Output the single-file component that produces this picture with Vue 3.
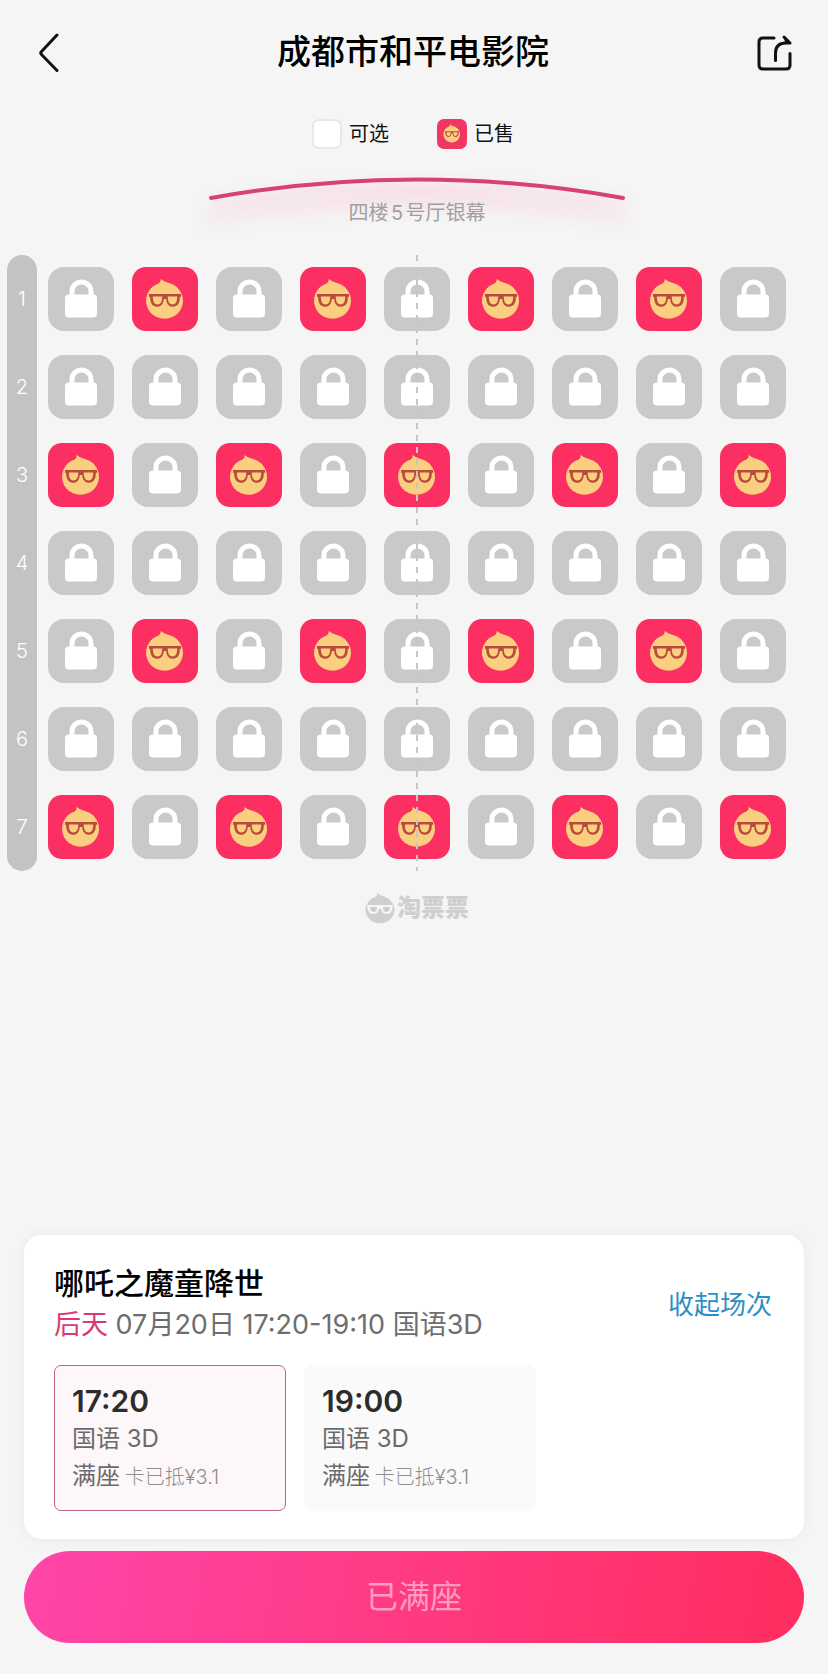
<script setup>
import { ref } from 'vue'

const odd = [2, 4, 6, 8]
const even = [1, 3, 5, 7, 9]
const soldByRow = { 1: odd, 3: even, 5: odd, 7: even }

const rows = Array.from({ length: 7 }, (_, r) => ({
  number: r + 1,
  seats: Array.from({ length: 9 }, (_, c) => ({
    number: c + 1,
    sold: (soldByRow[r + 1] || []).includes(c + 1),
  })),
}))

const sessions = [
  { time: '17:20', format: '国语 3D', state: '满座', note: '卡已抵¥3.1' },
  { time: '19:00', format: '国语 3D', state: '满座', note: '卡已抵¥3.1' },
]
const selected = ref(0)
</script>

<template>
  <main class="page">
    <svg class="defs" aria-hidden="true">
      <symbol id="lock" viewBox="0 0 66 64">
        <path d="M24 31V24.500a9.500 9.500 0 0 1 19 0V31" fill="none" stroke="#fff" stroke-width="5" />
        <rect x="17" y="27.500" width="32" height="23" rx="4" fill="#fff" />
      </symbol>
      <symbol id="face" viewBox="0 0 66 64">
        <path
          d="M28.500 12C32 15 37 15.500 41 17.500A18.500 18.200 0 1 1 24 17.500C27.500 16.500 29 15 28.500 12Z"
          fill="#fbcf80"
        />
        <path
          d="M17 27H49V29.500L47.800 30.500C47.800 36 45.500 39.800 41 39.800C37 39.800 34.600 37 34.200 32H31.800C31.400 37 29 39.800 25 39.800C20.500 39.800 18.200 36 18.200 30.500L17 29.500Z"
          fill="#b94b3c"
        />
        <path
          d="M20.800 29.500H30.300C30.300 34.500 28.600 37.500 25.500 37.500C22.200 37.500 20.800 34.500 20.800 29.500ZM35.700 29.500H45.200C45.200 34.500 43.800 37.500 40.500 37.500C37.400 37.500 35.700 34.500 35.700 29.500Z"
          fill="#fbcf80"
        />
      </symbol>
    </svg>

    <header class="header">
      <button class="icon-button" type="button" aria-label="返回">
        <svg width="22" height="40" viewBox="0 0 22 40">
          <path
            d="M20 3L4.500 19.500Q3 21 4.500 22.500L20 38.500"
            fill="none" stroke="#111" stroke-width="3" stroke-linecap="round" stroke-linejoin="round"
          />
        </svg>
      </button>
      <h1 class="cinema">成都市和平电影院</h1>
      <button class="icon-button" type="button" aria-label="分享">
        <svg width="38" height="38" viewBox="0 0 38 38">
          <g fill="none" stroke="#111" stroke-width="3" stroke-linecap="round" stroke-linejoin="round">
            <path d="M19 5H8Q4 5 4 9V32Q4 36 8 36H31Q35 36 35 32V20.500" />
            <path d="M20.500 27.500V20Q20.500 10 31 10H35L29 4" />
          </g>
          <path d="M29 4L36 10H30Z" fill="#111" />
        </svg>
      </button>
    </header>

    <ul class="legend">
      <li><span class="swatch free"></span>可选</li>
      <li>
        <span class="swatch taken"><svg><use href="#face" /></svg></span>已售
      </li>
    </ul>

    <section class="screen">
      <svg class="arc" viewBox="0 0 454 80" aria-hidden="true">
        <defs>
          <linearGradient id="glow" x1="0" y1="0" x2="0" y2="1">
            <stop offset="0" stop-color="#ff5a8a" stop-opacity="0.14" />
            <stop offset="1" stop-color="#ff5a8a" stop-opacity="0.03" />
          </linearGradient>
          <filter id="soft" x="-10%" y="-30%" width="120%" height="170%">
            <feGaussianBlur stdDeviation="6" />
          </filter>
        </defs>
        <path d="M20 29Q227 -6 434 29L440 60Q227 24 14 60Z" fill="url(#glow)" filter="url(#soft)" />
        <path d="M21 28Q227 -9 433 28" fill="none" stroke="#d84270" stroke-width="4" stroke-linecap="round" />
      </svg>
      <p class="hall">四楼5号厅银幕</p>
    </section>

    <section class="hall-map" aria-label="座位图">
      <ol class="rail">
        <li v-for="row in rows" :key="row.number">{{ row.number }}</li>
      </ol>
      <div class="seats">
        <div v-for="row in rows" :key="row.number" class="row">
          <button
            v-for="seat in row.seats"
            :key="seat.number"
            type="button"
            class="seat"
            :class="{ sold: seat.sold }"
            :aria-label="`${row.number}排${seat.number}座`"
            disabled
          >
            <svg><use :href="seat.sold ? '#face' : '#lock'" /></svg>
          </button>
        </div>
        <span class="axis"></span>
      </div>
    </section>

    <div class="brand">
      <svg width="30" height="32" viewBox="0 0 30 32" aria-hidden="true">
        <path d="M12 1C15 3.500 19 4 22 6A14.500 13.500 0 1 1 8 6C11 5 12.500 3.500 12 1Z" fill="#cfcfcf" />
        <path
          d="M2 13H28Q27.500 22 21.500 22Q17 22 16 17H14Q13 22 8.500 22Q2.500 22 2 13Z"
          fill="#f5f5f5"
        />
        <path d="M5 15H12Q12 20 8.700 20Q5.500 20 5 15ZM18 15H25Q24.500 20 21.300 20Q18 20 18 15Z" fill="#cfcfcf" />
      </svg>
      <span>淘票票</span>
    </div>

    <section class="card">
      <div class="card-head">
        <div>
          <h2 class="film">哪吒之魔童降世</h2>
          <p class="when"><em>后天</em> 07月20日 17:20-19:10 国语3D</p>
        </div>
        <a class="toggle" href="#">收起场次</a>
      </div>
      <div class="sessions">
        <button
          v-for="(session, i) in sessions"
          :key="session.time"
          type="button"
          class="session"
          :class="{ active: selected === i }"
          @click="selected = i"
        >
          <strong>{{ session.time }}</strong>
          <span>{{ session.format }}</span>
          <span>{{ session.state }} <small>{{ session.note }}</small></span>
        </button>
      </div>
    </section>

    <button class="submit" type="button" disabled>已满座</button>
  </main>
</template>

<style>
body {
  margin: 0;
  background: #f5f5f5;
}
</style>

<style scoped>
.page {
  box-sizing: border-box;
  min-height: 100vh;
  padding-bottom: 31px;
  display: flex;
  flex-direction: column;
  background: #f5f5f5;
  color: #111;
  font-family: Inter, "Noto Sans CJK SC", sans-serif;
}
button {
  padding: 0;
  border: 0;
  background: none;
  font-family: inherit;
  color: inherit;
}
h1, h2, p, ul, ol {
  margin: 0;
  padding: 0;
  list-style: none;
}
.defs {
  position: absolute;
  width: 0;
  height: 0;
}
.header {
  display: flex;
  align-items: center;
  justify-content: space-between;
  height: 104px;
  padding: 0 35px 0 37px;
}
.icon-button {
  display: flex;
  width: 38px;
}
.cinema {
  padding-right: 4px;
  font-size: 34px;
  line-height: 48px;
  font-weight: 500;
  color: #000;
}
.legend {
  display: flex;
  justify-content: center;
  gap: 48px;
  margin-top: 15px;
  padding-right: 2px;
  font-size: 20px;
  line-height: 30px;
}
.legend li {
  display: flex;
  gap: 7px;
}
.swatch {
  box-sizing: border-box;
  width: 30px;
  height: 30px;
  border-radius: 7px;
}
.free {
  background: #fff;
  border: 2px solid #e8e8e8;
}
.taken {
  background: #f23663;
}
.taken svg {
  display: block;
  width: 30px;
  height: 29px;
}
.screen {
  position: relative;
  margin: 21px 42px 0 48px;
  height: 85px;
}
.arc {
  position: absolute;
  top: 0;
  left: 50%;
  width: 454px;
  margin-left: -227px;
}
.hall {
  position: relative;
  padding-top: 29px;
  text-align: center;
  font-size: 20px;
  line-height: 28px;
  color: #a0a0a0;
  text-autospace: normal;
}
.hall-map {
  display: flex;
  gap: 11px;
  padding: 0 42px 0 7px;
}
.rail {
  width: 30px;
  padding: 12px 0;
  box-sizing: border-box;
  border-radius: 15px;
  background: #c3c3c3;
  color: #fff;
  display: flex;
  flex-direction: column;
  gap: 24px;
  font-size: 20px;
  font-weight: 300;
  line-height: 64px;
  text-align: center;
}
.seats {
  position: relative;
  flex: 1;
  display: flex;
  flex-direction: column;
  gap: 24px;
  padding: 12px 0;
}
.row {
  display: grid;
  grid-template-columns: repeat(9, 1fr);
  gap: 18px;
}
.seat {
  display: flex;
  justify-content: center;
  height: 64px;
  border-radius: 16px;
  background: #c8cac7;
}
.seat svg {
  width: 66px;
  height: 64px;
}
.seat.sold {
  border-radius: 14px;
  background: #fc2f63;
}
.axis {
  position: absolute;
  top: 0;
  bottom: 0;
  left: 50%;
  width: 2px;
  margin-left: -1px;
  background: repeating-linear-gradient(#c6c6c6 0 6px, transparent 6px 12px);
}
.brand {
  display: flex;
  align-items: center;
  justify-content: center;
  gap: 2px;
  margin: 20px 42px 32px 48px;
  font-size: 24px;
  line-height: 34px;
  font-weight: 900;
  color: #cfcfcf;
}
.card {
  margin: auto 24px 12px;
  padding: 28px 30px;
  border-radius: 18px;
  background: #fff;
  box-shadow: 0 0 14px rgba(0, 0, 0, 0.05);
}
.card-head {
  display: flex;
  align-items: center;
  justify-content: space-between;
  padding-right: 2px;
}
.film {
  font-size: 30px;
  line-height: 40px;
  font-weight: 500;
  color: #000;
}
.when {
  font-size: 27px;
  line-height: 44px;
  color: #6e6e6e;
}
.when em {
  font-style: normal;
  color: #d93a74;
}
.toggle {
  font-size: 26px;
  line-height: 36px;
  color: #2b8fc3;
  text-decoration: none;
}
.sessions {
  display: flex;
  gap: 18px;
  margin-top: 18px;
}
.session {
  box-sizing: border-box;
  width: 232px;
  padding: 17px 17px 14px;
  border: 1px solid #fafafa;
  border-radius: 7px;
  background: #fafafa;
  display: flex;
  flex-direction: column;
  text-align: left;
  font-size: 24px;
  line-height: 37px;
  color: #6a6a6a;
}
.session.active {
  border-color: #c0647f;
  background: #fef7f9;
}
.session strong {
  font-size: 30px;
  font-weight: 600;
  color: #2c2c2c;
}
.session small {
  margin-left: -2px;
  font-size: 20px;
  font-weight: 300;
  color: #8f8f8f;
}
.submit {
  margin: 0 24px;
  height: 92px;
  border-radius: 46px;
  background: linear-gradient(100deg, #ff45aa, #ff3a82 50%, #ff2d5e);
  font-size: 32px;
  line-height: 40px;
  color: rgba(255, 255, 255, 0.5);
}
</style>
